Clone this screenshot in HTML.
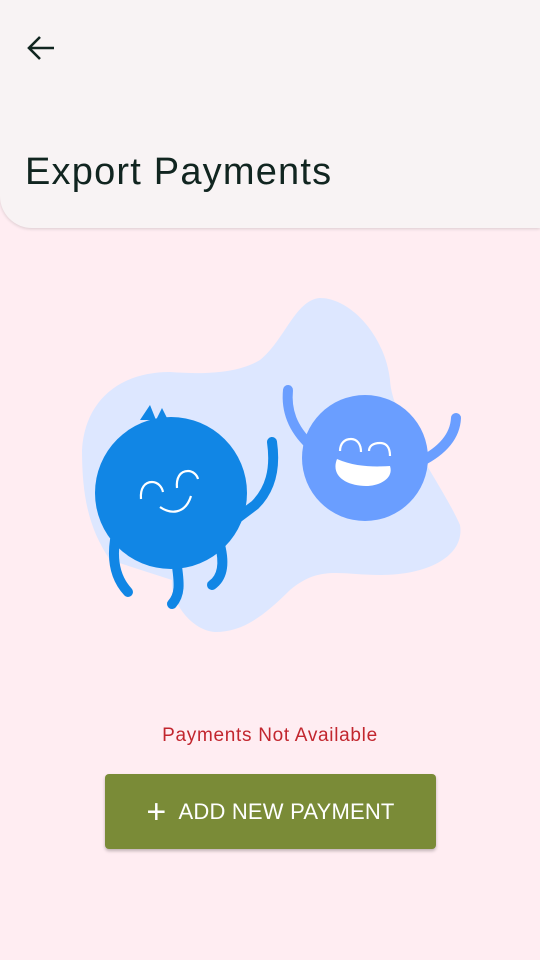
<!DOCTYPE html>
<html><head><meta charset="utf-8"><style>
html,body{margin:0;padding:0}
body{width:540px;height:960px;background:#FFEDF2;position:relative;overflow:hidden;font-family:"Liberation Sans",sans-serif}
.top{position:absolute;left:0;top:0;width:540px;height:228px;background:#F8F3F4;border-bottom-left-radius:32px;box-shadow:0 1px 3px rgba(0,0,0,.15)}
.title{position:absolute;left:25px;top:151px;font-size:38px;color:#112520;letter-spacing:1.2px}
.msg{position:absolute;top:725px;width:540px;text-align:center;color:#C2262E;font-size:19px;letter-spacing:.7px}
.btn{position:absolute;left:105px;top:774px;width:331px;height:75px;background:#7A8B37;border-radius:4px;box-shadow:0 2px 3px rgba(0,0,0,.25);color:#fff;font-size:22px;display:flex;align-items:center;justify-content:center;letter-spacing:.2px}
</style></head><body>
<div class="top">
<svg style="position:absolute;left:26px;top:34px" width="30" height="28" viewBox="0 0 30 28"><path d="M28 14H4M14 3L3 14l11 11" fill="none" stroke="#112520" stroke-width="2.6"/></svg>
<div class="title">Export Payments</div>
</div>
<svg style="position:absolute;left:0;top:0" width="540" height="960">
<path d="M260 360C285 340 295 300 320 298C350 298 385 335 390 380C392 420 440 480 460 525C465 555 430 575 380 575C340 575 320 565 290 590C260 620 240 632 215 632C190 630 170 600 172 580L110 560C90 530 82 500 82 450C85 400 120 372 170 372C210 375 240 372 260 360Z" fill="#DDE7FF"/>
<g stroke="#1186E5" stroke-width="10" stroke-linecap="round" fill="none">
<path d="M272 442C276 470 270 490 255 505L235 520"/>
<path d="M115 540C112 560 115 578 128 592"/>
<path d="M176 560C180 585 180 595 172 604"/>
<path d="M220 545C225 565 222 578 212 585"/>
</g>
<circle cx="171" cy="493" r="76" fill="#1186E5"/>
<path d="M140 420L150 405L156 420L162 408L168 420Z" fill="#1186E5"/>
<g stroke="#6A9EFF" stroke-width="10" stroke-linecap="round" fill="none">
<path d="M288 390C286 410 292 428 310 445"/>
<path d="M456 418C455 438 440 452 420 462"/>
</g>
<circle cx="365" cy="458" r="63" fill="#6A9EFF"/>
<g stroke="#fff" stroke-width="2.2" fill="none">
<path d="M141 499C140 488 145 482 152 482C158 482 162 487 163 492"/>
<path d="M177 488C176 478 180 471 188 471C193 471 197 475 198 479"/>
<path d="M160 507C170 514 185 515 191 496"/>
<path d="M340 451C340 444 344 439 351 439C357 439 361 444 361 452"/>
<path d="M369 451C369 446 373 443 380 443C386 443 390 447 390 456"/>
</g>
<path d="M337 459C355 467 375 467 390 466C394 478 380 486 366 486C348 486 330 477 337 459Z" fill="#fff"/>
</svg>
<div class="msg">Payments Not Available</div>
<div class="btn"><span style="font-size:34px;font-weight:300;margin-right:12px;line-height:1">+</span>ADD NEW PAYMENT</div>
</body></html>
